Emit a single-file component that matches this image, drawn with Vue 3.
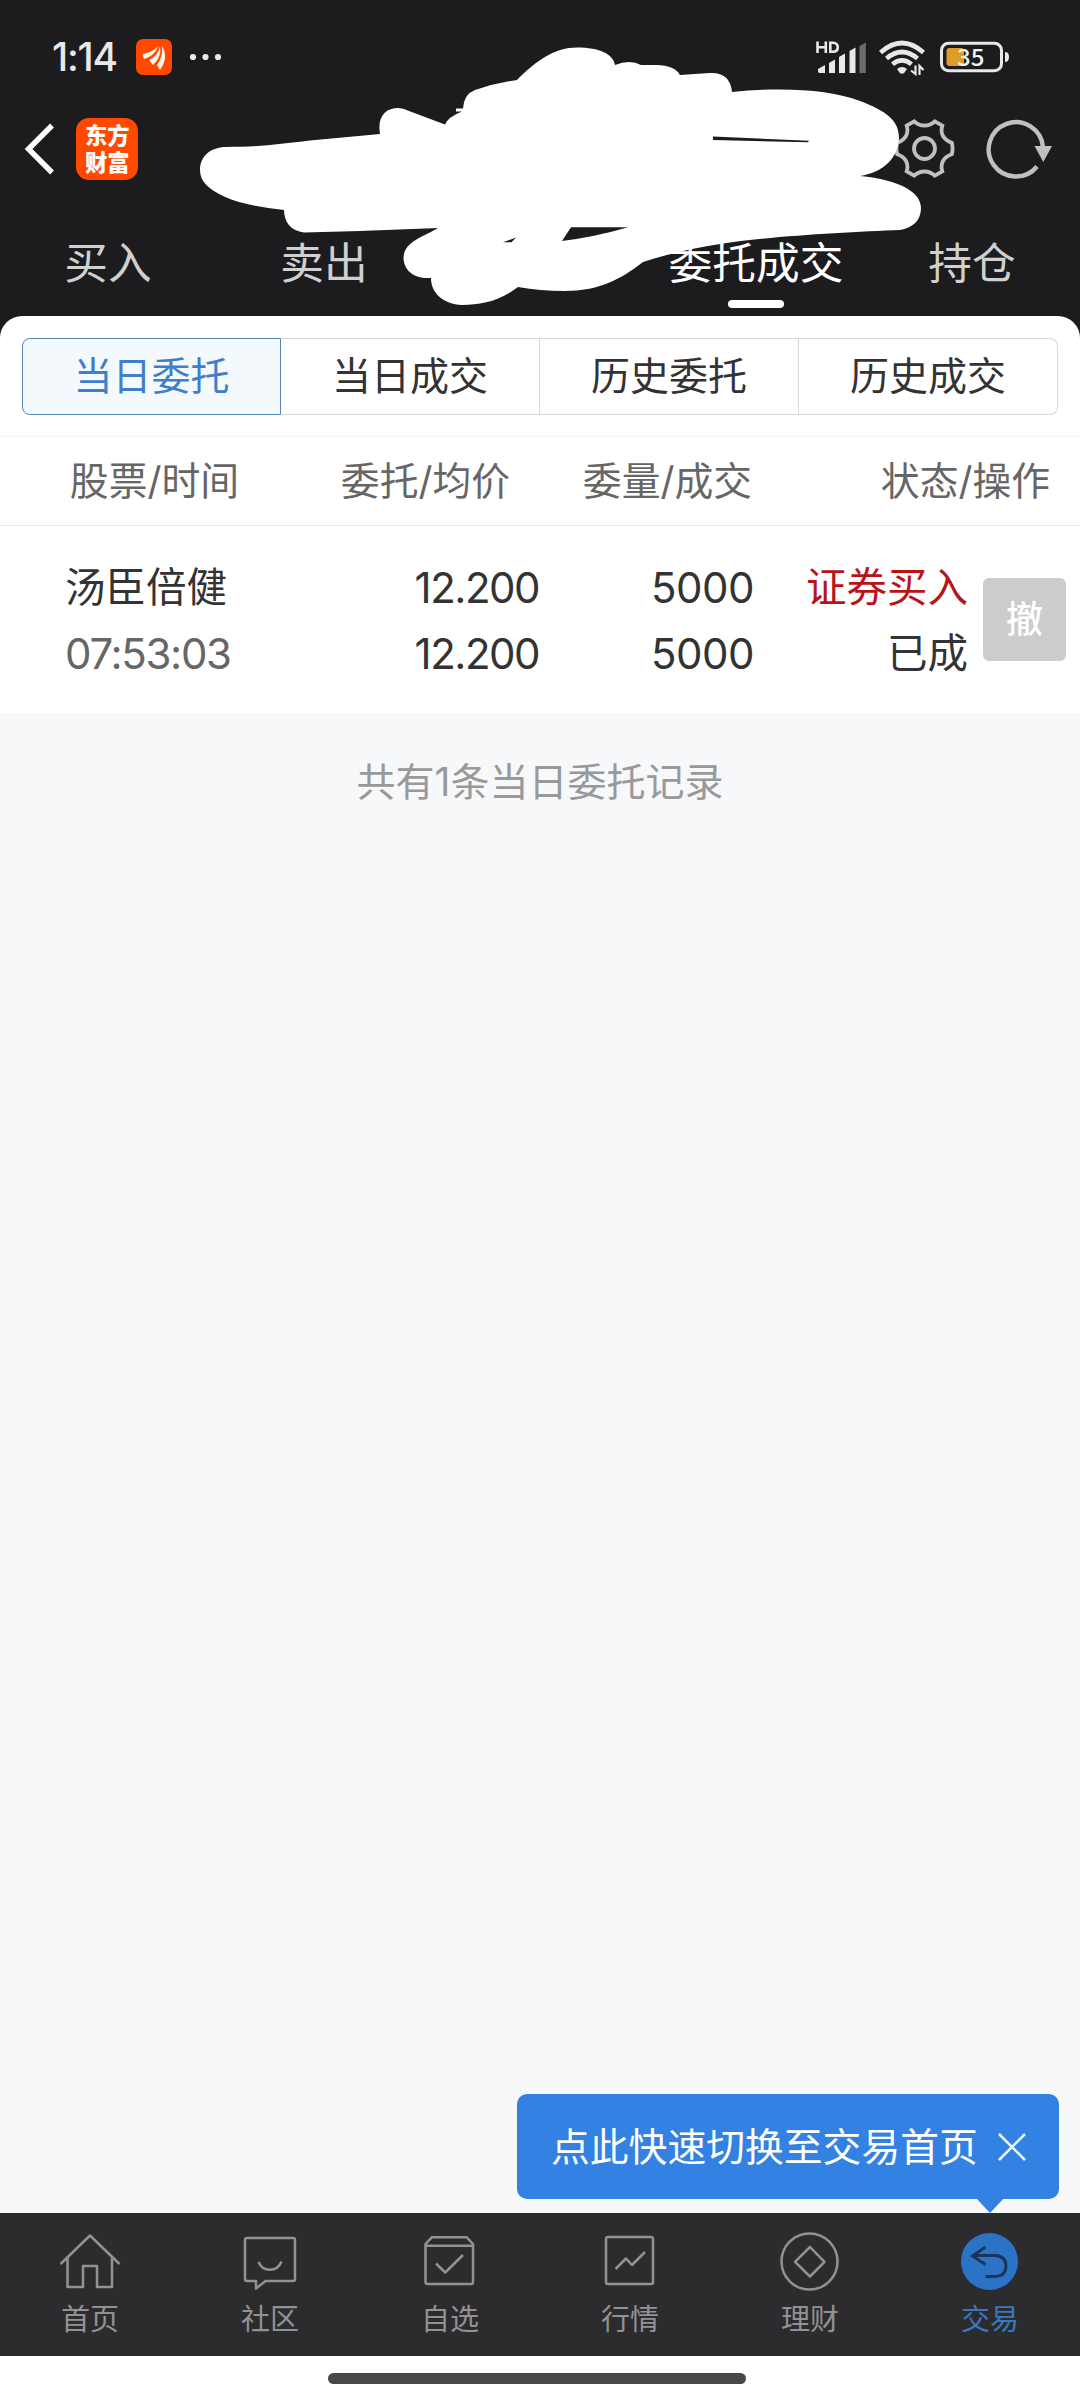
<script setup>
import { ref } from 'vue'

const topTabs = [
  { key: 'buy', label: '买入' },
  { key: 'sell', label: '卖出' },
  { key: 'cancel', label: '' },
  { key: 'orders', label: '委托成交' },
  { key: 'hold', label: '持仓' },
]
const activeTop = ref('orders')

const filters = ['当日委托', '当日成交', '历史委托', '历史成交']
const activeFilter = ref('当日委托')

const orders = ref([
  {
    name: '汤臣倍健',
    time: '07:53:03',
    price: '12.200',
    avg: '12.200',
    amount: '5000',
    dealt: '5000',
    side: '证券买入',
    status: '已成',
  },
])

const navItems = [
  { key: 'home', label: '首页' },
  { key: 'community', label: '社区' },
  { key: 'favorites', label: '自选' },
  { key: 'market', label: '行情' },
  { key: 'wealth', label: '理财' },
  { key: 'trade', label: '交易' },
]
const activeNav = ref('trade')
const showTip = ref(true)
</script>

<template>
  <div class="app">
    <header class="header">
      <div class="status-bar">
        <span class="clock">1:14</span>
        <svg class="notify" width="36" height="36" viewBox="0 0 36 36">
          <rect width="36" height="36" rx="7" fill="#ff4800" />
          <path d="M7 15Q17 13 22 7Q19 17 8 20Q6 17 7 15Z" fill="#fff6e8" />
          <path d="M13 21Q22 17 24 7Q26 18 17 26Z" fill="#fff6e8" />
          <path d="M21 26Q27 18 26 7Q33 18 24 31Z" fill="#fff6e8" />
        </svg>
        <svg class="dots" width="34" height="8" viewBox="0 0 34 8" fill="#e8e8e8">
          <circle cx="4" cy="4" r="3.1" /><circle cx="16.5" cy="4" r="3.1" /><circle cx="29" cy="4" r="3.1" />
        </svg>
        <div class="status-right">
          <svg width="194" height="38" viewBox="816 38 194 38">
            <g fill="none" stroke="#e8e8e8" stroke-width="2.6">
              <path d="M817.5 41.5V53M825.8 41.5V53M817.5 47.2H825.8" />
              <path d="M830.3 42.7V51.8H833Q837.8 51.5 837.8 47.2Q837.8 43 833 42.7Z" />
            </g>
            <g fill="#e8e8e8">
              <path d="M818 69L825 65V73H819.5Q818 73 818 71Z" />
              <path d="M829 63L835 59.5V73H829Z" />
              <path d="M839 57L845 53.5V73H839Z" />
              <path d="M849.5 51L855.5 47.5V73H849.5Z" />
              <path d="M859.5 46L865.8 42.5V73H859.5Z" fill="#6c6c6d" />
            </g>
            <g fill="none" stroke="#e8e8e8" stroke-width="4.6">
              <path d="M880.5 52.5Q902 33.5 923.5 52.5" />
              <path d="M886.5 58.5Q902 45.5 917.5 58.5" />
              <path d="M892.5 64.2Q902 56.5 911.5 64.2" />
            </g>
            <path d="M897 69Q902 65 907 69L904.5 72.5Q902 75 899.5 72.5Z" fill="#e8e8e8" />
            <path d="M915.5 65.5V74L911 70.5M919.5 75V66L923.5 70" fill="none" stroke="#e8e8e8" stroke-width="2.2" />
            <rect x="941.5" y="43.3" width="60" height="27.4" rx="7" fill="none" stroke="#e8e8e8" stroke-width="3" />
            <rect x="946.5" y="48" width="17.5" height="18" rx="3" fill="#e09c28" />
            <path d="M1005 52Q1009 52 1009 57Q1009 62 1005 62Z" fill="#e8e8e8" />
            <text x="957" y="66" class="battery">35</text>
          </svg>
        </div>
      </div>

      <div class="title-bar">
        <svg class="back" width="32" height="54" viewBox="0 0 32 54">
          <path d="M28 3.5L4.5 27L28 50.5" fill="none" stroke="#fff" stroke-width="5.4" />
        </svg>
        <div class="logo">东方财富</div>
        <div class="title-actions">
          <svg width="62" height="62" viewBox="894.5 117.5 62 62" fill="none" stroke="#c0c0c0" stroke-width="3.8">
            <path
              d="M914.7 120.8Q919 125 925 125T935.3 120.8L942.8 125.2Q941 131 943.5 135.5T952.3 142.2Q953.8 148 952.3 153.8Q946 156 943.5 160.500T942.8 170.8L935.3 175.2Q931 171 925 171T914.7 175.2L907.2 170.8Q909 165 906.5 160.5T897.7 153.8Q896.2 148 897.7 142.2Q904 140 906.5 135.5T907.2 125.2Z"
            />
            <circle cx="925" cy="148" r="10.5" />
          </svg>
          <svg width="68" height="62" viewBox="986 118 68 62">
            <path d="M1037 166.5A27.2 27.2 0 1 1 1043 147" fill="none" stroke="#c0c0c0" stroke-width="4.4" />
            <path d="M1034.5 146H1052L1043.3 162Z" fill="#c0c0c0" />
          </svg>
        </div>
      </div>

      <nav class="top-tabs">
        <div
          v-for="tab in topTabs"
          :key="tab.key"
          class="top-tab"
          :class="{ active: tab.key === activeTop }"
          @click="activeTop = tab.key"
        >
          {{ tab.label }}
        </div>
      </nav>

      <!-- marker scribble covering the account name -->
      <svg class="scribble" width="1080" height="316" viewBox="0 0 1080 316">
        <path
          fill="#fff"
          fill-rule="evenodd"
          d="M226 147C260 147 280 144 310 140.5L380 134C377 116 386 108 398 108Q403 108 409 111L445 124.5Q448 117 462 111.5H456V108.5H463Q464 94 475 90Q495 83 517 80C537 60 555 47.5 577 47.5C600 47.5 613 54 615 65Q630 59 641 65C655 65 674 63 680 75L710 73Q730 72 732 92C780 87 830 89 860 101C886 111 899 120 899 138C898 158 884 172 860 176C900 180 921 192 921 208C921 221 912 228 900 230C850 232 770 236 720 244Q680 250 643 262C620 280 598 291 565 291Q540 291 518 287C500 301 481 305 462 305C443 304 431 293 431 278C413 279 404 270 403.5 258C404 241 424 237 438 228L360 231L304 232.5C291 231 284 222 284 210C260 207 240 204 224 196.5C209 189 200 182 200 170C200 156 211 147 226 147Z
             M571 227.3L562 241Q595 237 628 227.3Z
             M503 242.3L516 237.5L511.5 242.3Z
             M713 136.5V140L808 142.2L809 140.8Z"
        />
      </svg>
    </header>

    <main class="sheet">
      <div class="filter-wrap">
        <div class="filters">
          <div
            v-for="f in filters"
            :key="f"
            class="filter"
            :class="{ active: f === activeFilter }"
            @click="activeFilter = f"
          >
            {{ f }}
          </div>
        </div>
      </div>

      <div class="thead">
        <span>股票/时间</span>
        <span>委托/均价</span>
        <span>委量/成交</span>
        <span>状态/操作</span>
      </div>

      <div v-for="o in orders" :key="o.time" class="order">
        <div class="col name"><span class="cjk">{{ o.name }}</span><span class="time">{{ o.time }}</span></div>
        <div class="col price"><span>{{ o.price }}</span><span>{{ o.avg }}</span></div>
        <div class="col amount"><span>{{ o.amount }}</span><span>{{ o.dealt }}</span></div>
        <div class="col"><span class="cjk side">{{ o.side }}</span><span class="cjk">{{ o.status }}</span></div>
        <button class="revoke">撤</button>
      </div>
    </main>

    <section class="rest">
      <p class="summary">共有{{ orders.length }}条当日委托记录</p>
      <div v-if="showTip" class="tip">
        <span>点此快速切换至交易首页</span>
        <svg width="30" height="30" viewBox="0 0 30 30" @click="showTip = false">
          <path d="M2 2L28 28M28 2L2 28" stroke="#e9f6ff" stroke-width="2.6" />
        </svg>
      </div>
    </section>

    <nav class="bottom-nav">
      <div
        v-for="item in navItems"
        :key="item.key"
        class="nav-item"
        :class="{ active: item.key === activeNav }"
        @click="activeNav = item.key"
      >
        <svg width="64" height="64" viewBox="0 0 64 64" fill="none" stroke="#929294" stroke-width="2.5" stroke-linejoin="round">
          <template v-if="item.key === 'home'">
            <path d="M2.5 35L32 6.5L61.5 35" />
            <path d="M9.5 29V58H25V37H39V58H54V29" />
          </template>
          <template v-else-if="item.key === 'community'">
            <path d="M9 9H55Q57 9 57 11V50Q57 52 55 52H27.5L18 59.5V52H9Q7 52 7 50V11Q7 9 9 9Z" />
            <path d="M20.5 33C25 43.5 39 43.5 43.5 32.5" />
          </template>
          <template v-else-if="item.key === 'favorites'">
            <path d="M7.5 15L14 8.2H48.5L55 15V53Q55 55 53 55H9.5Q7.5 55 7.5 53ZM7.5 16.8H55" />
            <path d="M18 34.5L27.2 43.5L45 26" />
          </template>
          <template v-else-if="item.key === 'market'">
            <rect x="8" y="8" width="47" height="47" rx="2" />
            <path d="M17.5 40L28 29.5L34 36L47 23" />
          </template>
          <template v-else-if="item.key === 'wealth'">
            <circle cx="31.5" cy="32.5" r="28" />
            <path d="M32 18L46.5 32.8L32 47.5L17 32.8Z" />
          </template>
          <template v-else>
            <circle cx="31.5" cy="32.5" r="28.5" fill="#2b73c7" stroke="none" />
            <path d="M27.5 18L14.5 27L27.5 35.5M14.500 26.5H37Q48 27 48 37T37 47.5H27.5" stroke="#1b3457" stroke-width="2.8" stroke-linejoin="miter" />
          </template>
        </svg>
        <span>{{ item.label }}</span>
      </div>
    </nav>
    <div class="gesture"><i></i></div>
  </div>
</template>

<style>
body { margin: 0; background: #fff; }
</style>

<style scoped>
.app { width: 1080px; height: 2400px; display: flex; flex-direction: column; overflow: hidden; background: #1c1c1e; font-family: Inter, "Noto Sans CJK SC", sans-serif; color: #333; }
.header { position: relative; height: 316px; flex: none; box-sizing: border-box; padding-top: 37px; }

.status-bar { display: flex; align-items: center; height: 40px; padding: 0 70px 0 52px; color: #e8e8e8; }
.clock { width: 84px; font-size: 39px; font-weight: 500; line-height: 40px; letter-spacing: -1.2px; white-space: nowrap; }
.dots { margin-left: 17px; }
.status-right { margin-left: auto; height: 38px; }
.battery { font-family: "Noto Sans CJK SC", sans-serif; font-size: 24px; font-weight: 500; fill: #f0f0f0; }

.title-bar { display: flex; align-items: center; height: 62px; margin-top: 41px; padding: 0 26px 0 24px; }
.logo { width: 62px; height: 62px; box-sizing: border-box; margin-left: 20px; padding: 3px 8px 0 9px; border-radius: 13px; background: #ff4800; color: #fff; font-family: "Noto Sans CJK SC", sans-serif; font-size: 22.3px; font-weight: 900; line-height: 26.5px; word-break: break-all; }
.title-actions { display: flex; align-items: center; margin-left: auto; gap: 30px; }

.top-tabs { display: grid; grid-template-columns: repeat(5, 1fr); margin-top: 36px; height: 100px; }
.top-tab { position: relative; text-align: center; font-size: 43.7px; line-height: 95px; color: #d0d0d0; white-space: nowrap; }
.top-tab.active { color: #fff; }
.top-tab.active::after { content: ""; position: absolute; left: 80px; top: 84px; width: 56px; height: 8px; border-radius: 4px; background: #fff; }
.scribble { position: absolute; left: 0; top: 0; pointer-events: none; }

.sheet { flex: none; background: #fff; border-radius: 22px 22px 0 0; }
.filter-wrap { height: 121px; box-sizing: border-box; padding: 22px 22px 0; border-bottom: 1px solid #f5f5f5; }
.filters { display: grid; grid-template-columns: repeat(4, 1fr); height: 77px; box-sizing: border-box; }
.filter { border: 1px solid #d6d8d9; border-left-width: 0; text-align: center; font-size: 39px; line-height: 74px; }
.filter:first-child { border-left-width: 1px; border-radius: 8px 0 0 8px; }
.filter:last-child { border-radius: 0 8px 8px 0; }
.filter.active { color: #3f7fca; background: #f4f9fe; border-color: #5585b0; }

.thead { display: grid; grid-template-columns: 239px 271px 242px 298px; height: 89px; box-sizing: border-box; border-bottom: 1px solid #ebebeb; text-align: right; font-size: 38.8px; line-height: 88px; color: #666; }

.order { display: grid; grid-template-columns: 240px 300px 214px 214px 98px; height: 187px; align-items: center; }
.col { display: flex; flex-direction: column; text-align: right; font-size: 42px; line-height: 66px; padding-top: 2px; }
.col.name { text-align: left; padding-left: 65px; }
.col.price { letter-spacing: -1.5px; padding-right: 1px; }
.col.amount { letter-spacing: -0.5px; }
.cjk { font-size: 40.5px; }
.time { color: #666; white-space: nowrap; letter-spacing: -1.3px; }
.side { color: #b81418; }
.revoke { width: 83px; height: 83px; margin: 0 0 0 15px; padding: 0; border: 0; border-radius: 6px; background: #ccc; color: #fff; font-family: inherit; font-size: 37px; font-weight: 500; line-height: 83px; }

.rest { position: relative; flex: 1; background: #f6f8fa; }
.summary { margin: 40px 0 0; text-align: center; font-size: 39px; line-height: 58px; color: #999; }
.tip { position: absolute; right: 21px; bottom: 14px; width: 542px; height: 105px; box-sizing: border-box; padding: 0 32px 0 34px; border-radius: 10px; background: #3381e3; color: #fff; display: flex; align-items: center; justify-content: space-between; font-size: 38.8px; }
.tip span { margin-top: -5px; }
.tip::after { content: ""; position: absolute; right: 55px; bottom: -14px; border: 14px solid transparent; border-top: 15px solid #3381e3; border-bottom: 0; }

.bottom-nav { flex: none; display: grid; grid-template-columns: repeat(6, 1fr); height: 143px; background: #2c2c2e; }
.nav-item { display: flex; flex-direction: column; align-items: center; padding-top: 16px; font-size: 29px; color: #929294; }
.nav-item span { line-height: 40px; margin-top: 7px; }
.nav-item.active { color: #3a78bf; }
.gesture { flex: none; height: 44px; background: #fff; display: flex; justify-content: center; }
.gesture i { width: 418px; height: 11px; margin: 17px 6px 0 0; border-radius: 6px; background: #484848; }
</style>
